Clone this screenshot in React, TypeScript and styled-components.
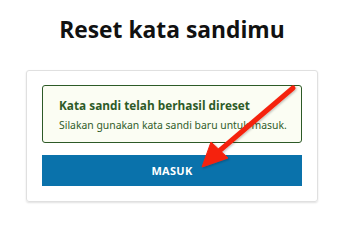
import { FC } from "react";
import styled, { createGlobalStyle } from "styled-components";

const GlobalStyle = createGlobalStyle`
  html, body {
    margin: 0;
    padding: 0;
    background: #ffffff;
  }

  body {
    font-family: "Open Sans", "Noto Sans", sans-serif;
  }
`;

const App: FC = () => {
  return (
    <>
      <GlobalStyle />
      <Page>
        <Title>Reset kata sandimu</Title>

        <Card>
          <Alert>
            <AlertTitle>Kata sandi telah berhasil direset</AlertTitle>
            <AlertText>Silakan gunakan kata sandi baru untuk masuk.</AlertText>
          </Alert>

          <Button type="button">Masuk</Button>
        </Card>

        <Arrow viewBox="0 0 340 227" aria-hidden="true">
          <defs>
            <filter id="shade" x="-20%" y="-20%" width="140%" height="140%">
              <feDropShadow dx="1" dy="1" stdDeviation="1" floodColor="#000" floodOpacity="0.25" />
            </filter>
          </defs>
          <g filter="url(#shade)" fill="#f5230f" stroke="#f5230f">
            <line x1="293" y1="88" x2="218" y2="152" strokeWidth="5" strokeLinecap="round" />
            <polygon points="202,167 211,142 228,158" strokeWidth="1" strokeLinejoin="round" />
          </g>
        </Arrow>
      </Page>
    </>
  );
};

const Page = styled.div`
  position: relative;
  width: 340px;
  height: 227px;
  padding-top: 15px;
  box-sizing: border-box;
`;

const Title = styled.h1`
  margin: 0 0 25px 26px;
  width: 292px;
  text-align: center;
  font-size: 22.8px;
  line-height: 30px;
  font-weight: 700;
  color: #111111;
`;

const Card = styled.div`
  margin-left: 26px;
  width: 292px;
  box-sizing: border-box;
  padding: 14px 15px 15px 15px;
  border: 1px solid #e0e0e0;
  border-radius: 3px;
  box-shadow: 0 1px 2px rgba(0, 0, 0, 0.12);
  display: flex;
  flex-direction: column;
  gap: 12px;
`;

const Alert = styled.div`
  height: 58px;
  box-sizing: border-box;
  padding: 11px 15px 0 16px;
  border: 1px solid #2d5a27;
  border-radius: 3px;
  background: #fbfdf3;
  color: #2d5a27;
`;

const AlertTitle = styled.div`
  font-size: 11.8px;
  line-height: 17px;
  font-weight: 700;
`;

const AlertText = styled.div`
  margin-top: 4px;
  font-family: "Noto Sans", sans-serif;
  font-size: 10.4px;
  line-height: 15px;
  color: #2f5c29;
  white-space: nowrap;
`;

const Button = styled.button`
  height: 31px;
  border: none;
  border-radius: 0;
  background: #0a72ab;
  color: #ffffff;
  font-family: "Open Sans", "Noto Sans", sans-serif;
  font-size: 11px;
  font-weight: 700;
  text-transform: uppercase;
  letter-spacing: 0.3px;
  padding: 0;
`;

const Arrow = styled.svg`
  position: absolute;
  left: 0;
  top: 0;
  width: 340px;
  height: 227px;
  pointer-events: none;
`;

export default App;
